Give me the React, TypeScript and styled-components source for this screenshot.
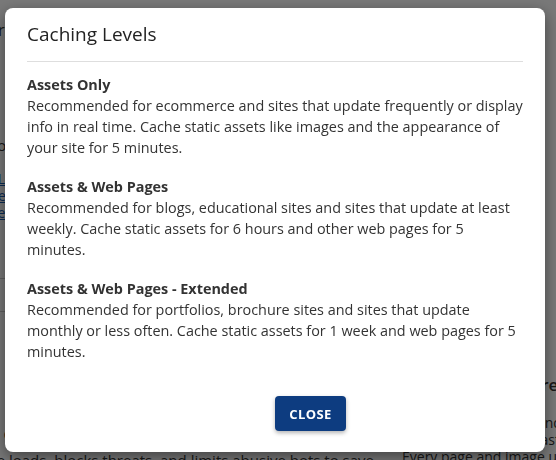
import React from "react"
import styled, { createGlobalStyle } from "styled-components"

const levels = [
  {
    name: "Assets Only",
    text: "Recommended for ecommerce and sites that update frequently or display info in real time. Cache static assets like images and the appearance of your site for 5 minutes.",
  },
  {
    name: "Assets & Web Pages",
    text: "Recommended for blogs, educational sites and sites that update at least weekly. Cache static assets for 6 hours and other web pages for 5 minutes.",
  },
  {
    name: "Assets & Web Pages - Extended",
    text: "Recommended for portfolios, brochure sites and sites that update monthly or less often. Cache static assets for 1 week and web pages for 5 minutes.",
  },
]

const App = () => {
  return (
    <>
      <GlobalStyle />
      {/* the settings page behind the dialog */}
      <Page>
        <LeftColumn>
          <PageTitle>Performance Caching Basic</PageTitle>
          <PageText $gap={93} $right>Choose how content is stored per visitor</PageText>
          <LinkList>
            <a>Learn more about the cache</a>
            <a>Clear the cache from the dashboard</a>
            <a>Read the guide about caching menu</a>
            <a>Contact support</a>
          </LinkList>
          <Rows>
            <Row>Caching level</Row>
            <Row>Developer mode</Row>
          </Rows>
          <PageText $right>Free CDN with your hosting pa</PageText>
          <PageText $gap={6} $indent={309}>page loads, blocks threats, and limits abusive bots to save</PageText>
        </LeftColumn>
        <RightColumn>
          <SideHeading>Faster and more reliable hig</SideHeading>
          <PageText $small>Keep your site quick and light,</PageText>
          <PageText $small>with pages that stay fast as s</PageText>
          <PageText $small>Every page and image up</PageText>
        </RightColumn>
      </Page>
      <Overlay>
        <Dialog role="dialog">
          <Header>
            <Title>Caching Levels</Title>
          </Header>
          <Body>
            {levels.map((level) => (
              <Level key={level.name}>
                <LevelName>{level.name}</LevelName>
                <LevelText>{level.text}</LevelText>
              </Level>
            ))}
          </Body>
          <Footer>
            <CloseButton type="button">Close</CloseButton>
          </Footer>
        </Dialog>
      </Overlay>
    </>
  )
}

const GlobalStyle = createGlobalStyle`
  html, body {
    margin: 0;
    height: 100%;
    overflow: hidden;
    background: #fff;
  }
  body {
    font-family: "Open Sans", "Noto Sans", sans-serif;
    color: #333;
  }
`

const Page = styled.div`
  display: grid;
  grid-template-columns: 520px 400px;
  column-gap: 20px;
  width: 940px;
  margin-left: -338px;
  padding-top: 18px;
`

const LeftColumn = styled.div`
  display: flex;
  flex-direction: column;
  min-width: 0;
`

const RightColumn = styled.div`
  display: flex;
  flex-direction: column;
  padding-top: 355px;
  margin-left: 200px;
`

const PageTitle = styled.div`
  font-size: 16px;
  line-height: 24px;
  color: #333;
  text-align: right;
`

const PageText = styled.div<{ $gap?: number; $indent?: number; $right?: boolean; $small?: boolean }>`
  font-size: ${(p) => (p.$small ? "14px" : "15px")};
  line-height: ${(p) => (p.$small ? "17px" : "20px")};
  margin-top: ${(p) => p.$gap ?? 0}px;
  margin-left: ${(p) => p.$indent ?? 0}px;
  text-align: ${(p) => (p.$right ? "right" : "left")};
  white-space: nowrap;
`

const LinkList = styled.div`
  display: flex;
  flex-direction: column;
  margin-top: 15px;
  font-size: 14px;
  line-height: 17px;
  text-align: right;

  a {
    color: #1a5cb0;
    text-decoration: underline;
  }
`

const Rows = styled.div`
  margin: 40px 0 80px;
`

const Row = styled.div`
  border-top: 1px solid #ccc;
  height: 32px;
  font-size: 14px;
  line-height: 32px;
`

const SideHeading = styled.div`
  font-size: 17px;
  font-weight: 600;
  line-height: 24px;
  margin-bottom: 17px;
  white-space: nowrap;
`

const Overlay = styled.div`
  position: fixed;
  inset: 0;
  background: rgba(0, 0, 0, 0.53);
  display: flex;
  justify-content: center;
  align-items: flex-start;
  padding-top: 8px;
  padding-right: 6px;
`

const Dialog = styled.div`
  width: 540px;
  background: #fff;
  border-radius: 8px;
  box-shadow: 0 5px 15px rgba(0, 0, 0, 0.45);
  padding: 0 22px 21px;
  box-sizing: border-box;
`

const Header = styled.div`
  padding: 12px 0 13px;
  border-bottom: 1px solid #dedede;
`

const Title = styled.h2`
  margin: 0;
  font-size: 19px;
  line-height: 28px;
  font-weight: 400;
  color: #222;
`

const Body = styled.div`
  padding-top: 12px;
`

const Level = styled.div`
  margin-bottom: 18px;

  &:last-child {
    margin-bottom: 0;
  }
`

const LevelName = styled.div`
  font-size: 14.4px;
  line-height: 21px;
  font-weight: 700;
  color: #333;
`

const LevelText = styled.p`
  margin: 0;
  font-size: 14.4px;
  line-height: 21px;
  color: #333;
`

const Footer = styled.div`
  display: flex;
  justify-content: center;
  padding: 34px 0 0 71px;
`

const CloseButton = styled.button`
  width: 71px;
  height: 35px;
  border: none;
  border-radius: 4px;
  background: #0d3c80;
  color: #fff;
  font-family: "Open Sans", "Noto Sans", sans-serif;
  font-size: 13px;
  font-weight: 700;
  letter-spacing: 0.4px;
  text-transform: uppercase;
  box-shadow: 0 2px 4px rgba(0, 0, 0, 0.3);
  cursor: pointer;
`

export default App
